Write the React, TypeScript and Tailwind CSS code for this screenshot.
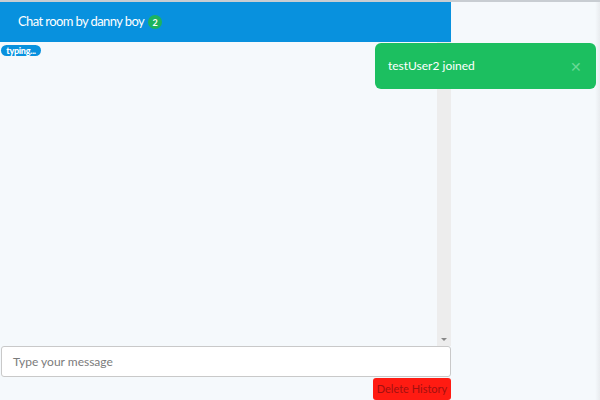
import React from "react";

export default function App() {
  return (
    <div
      className="relative w-[600px] h-[400px] overflow-hidden bg-[#f5f9fc] border-t-2 border-[#c8cdd2]"
      style={{ fontFamily: "Lato, 'Liberation Sans', sans-serif" }}
    >
      <div className="flex h-full">
        <div className="w-[451px] flex flex-col">
          <div className="h-[40px] bg-[#0891de] flex items-center pl-[18px] text-white text-[13px]">
            <span className="tracking-[-0.6px]">Chat room by danny boy</span>
            <span className="ml-[4px] w-[14px] h-[14px] rounded-full bg-[#1db35e] text-[9px] font-bold flex items-center justify-center leading-none">
              2
            </span>
          </div>
          <div className="flex-1 flex">
            <div className="flex-1 pt-[3px] pl-[1px] flex items-start">
              <div className="flex items-center h-[11px] w-[40px] justify-center rounded-full bg-[#0891de] text-white text-[9px] font-black tracking-[-0.3px] leading-none">
                typing...
              </div>
            </div>
            <div className="w-[14px] bg-[#ededed] flex flex-col justify-end items-center pb-[5px]">
              <div className="w-0 h-0 border-l-[3px] border-r-[3px] border-t-[3px] border-l-transparent border-r-transparent border-t-[#888]" />
            </div>
          </div>
          <div className="h-[31px] ml-[1px] bg-white border border-[#c9c9c9] rounded-[3px] flex items-center pl-[11px] text-[12px] text-[#7b7b7b]">
            Type your message
          </div>
          <div className="flex justify-end pt-[1px]">
            <div className="w-[78px] h-[22px] bg-[#ff1b12] rounded-[3px] text-[#a31010] text-[11px] flex items-center justify-center">
              Delete History
            </div>
          </div>
        </div>
        <div className="flex-1" />
        <div className="w-[5px] bg-gradient-to-r from-[#f5f9fc] to-[#e9ecef]" />
      </div>
      <div className="absolute left-[375px] top-[41px] w-[221px] h-[46px] rounded-[6px] bg-[#1cbf60] flex items-center justify-between pl-[13px] pr-[14px] text-white text-[12px]">
        <span>testUser2 joined</span>
        <span className="text-[#6ad896] text-[14px] font-light">✕</span>
      </div>
    </div>
  );
}
